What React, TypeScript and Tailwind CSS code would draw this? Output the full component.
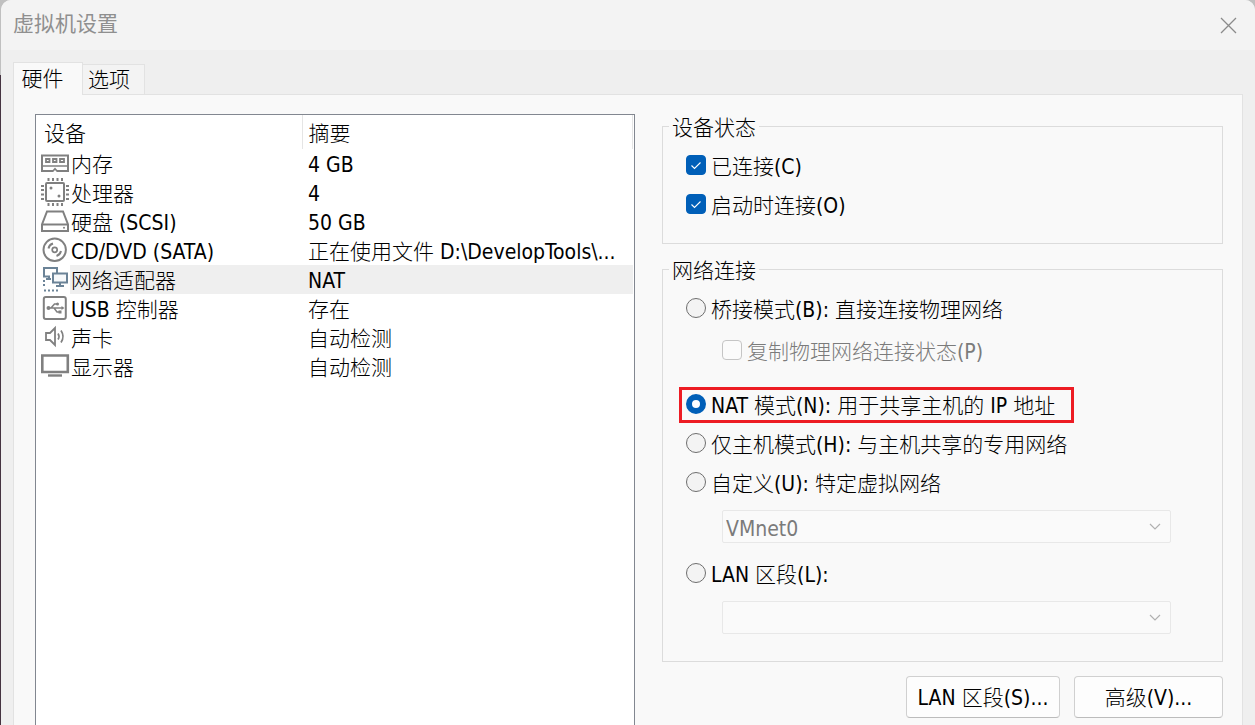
import { useState } from "react";
import type { ReactNode } from "react";

const stroke = { fill: "none", stroke: "#808080", strokeWidth: 2 } as const;

function Icon({ children }: { children: ReactNode }) {
  return (
    <svg width="30" height="29" viewBox="0 0 30 29" className="shrink-0" aria-hidden="true">
      {children}
    </svg>
  );
}

const MemoryIcon = () => (
  <Icon>
    <g {...stroke}>
      <path d="M2 6.500h26v15.500H2z" />
      <path d="M6 10h3.500v3H6zM13 10h3.500v3H13zM20 10h4v3h-4z" strokeWidth="1.800" />
      <path d="M2 17h26" strokeWidth="1.500" />
    </g>
    <path d="M11 23l4-4.500 4 4.500z" fill="#808080" />
    <path d="M13.200 23l1.800-2 1.800 2z" fill="#fff" />
  </Icon>
);

const CpuIcon = () => (
  <Icon>
    <g {...stroke}>
      <rect x="6" y="5" width="18" height="18" rx="1" />
      <path d="M8.500 0v3M13 0v3M17.500 0v3M22 0v3M8.500 25v3M13 25v3M17.500 25v3M22 25v3" />
      <path d="M1 8h3M1 12h3M1 16.500h3M1 21h3M26 8h3M26 12h3M26 16.500h3M26 21h3" />
    </g>
    <circle cx="11" cy="10" r="1.500" fill="#808080" />
    <circle cx="19" cy="18" r="1.500" fill="#808080" />
  </Icon>
);

const DiskIcon = () => (
  <Icon>
    <g {...stroke}>
      <path d="M7 4.500h16l5 13v6.500H2v-6.500z" />
      <path d="M2 17.500h26" />
    </g>
    <circle cx="24" cy="20.800" r="1" fill="#808080" />
  </Icon>
);

const DiscIcon = () => (
  <Icon>
    <g {...stroke}>
      <circle cx="14.700" cy="13.800" r="11.200" />
      <circle cx="14.700" cy="13.800" r="2.500" strokeWidth="1.700" />
      <path d="M8.500 12.500a6.500 6.500 0 0 1 4.500-5M21 15a6.500 6.500 0 0 1-4.500 5" />
    </g>
  </Icon>
);

const NetworkIcon = () => (
  <Icon>
    <g fill="none" stroke="#6b8397" strokeWidth="2">
      <path d="M10 11.500H4V3h13v5" />
      <path d="M6 14h5M9 11v3" />
      <path d="M13 8.500h14v9H13z" fill="#f7f9fb" />
      <path d="M20 18v3M16 21h8" />
      <path d="M4 15v8M4 25.500h16" strokeDasharray="2 2" />
    </g>
  </Icon>
);

const UsbIcon = () => (
  <Icon>
    <rect x="3.800" y="3" width="22" height="22" rx="2" {...stroke} />
    <g fill="none" stroke="#808080" strokeWidth="1.500">
      <path d="M8 14h15M11 14l3.500-4h3M14 14l3 4h2.500" />
    </g>
    <circle cx="8.500" cy="14" r="2" fill="#808080" />
    <circle cx="17.500" cy="10" r="1.500" fill="#808080" />
    <path d="M18.500 16.500h3v3h-3zM21.500 12l3 2-3 2z" fill="#808080" />
  </Icon>
);

const SoundIcon = () => (
  <Icon>
    <path d="M6 10h4l5-5v17l-5-5H6z" {...stroke} strokeWidth="1.800" />
    <path d="M18 10.500q2 3 0 6M21 7.500q4 6 0 12" {...stroke} strokeWidth="1.700" />
  </Icon>
);

const DisplayIcon = () => (
  <Icon>
    <path d="M2.300 3.500h25.500v16.500H2.300z" {...stroke} strokeWidth="2.600" />
    <path d="M8 23.500h14" {...stroke} strokeWidth="2.400" />
  </Icon>
);

const devices = [
  { name: "内存", summary: "4 GB", icon: <MemoryIcon /> },
  { name: "处理器", summary: "4", icon: <CpuIcon /> },
  { name: "硬盘 (SCSI)", summary: "50 GB", icon: <DiskIcon /> },
  { name: "CD/DVD (SATA)", summary: "正在使用文件 D:\\DevelopTools\\...", icon: <DiscIcon /> },
  { name: "网络适配器", summary: "NAT", icon: <NetworkIcon />, selected: true },
  { name: "USB 控制器", summary: "存在", icon: <UsbIcon /> },
  { name: "声卡", summary: "自动检测", icon: <SoundIcon /> },
  { name: "显示器", summary: "自动检测", icon: <DisplayIcon /> },
];

function Group({ title, className, children }: { title: string; className: string; children: ReactNode }) {
  return (
    <fieldset className={`min-w-0 border border-[#dcdcdc] pr-[51px] pl-[23px] ${className}`}>
      <legend className="-ml-[17px] h-6 px-[3px] leading-7">{title}</legend>
      {children}
    </fieldset>
  );
}

function Check({ label, defaultChecked, disabled }: { label: string; defaultChecked?: boolean; disabled?: boolean }) {
  return (
    <label className={`flex items-center gap-[5px] ${disabled ? "text-[#7b7b7b]" : ""}`}>
      <span className="grid">
        <input
          type="checkbox"
          defaultChecked={defaultChecked}
          disabled={disabled}
          className="peer col-start-1 row-start-1 size-5 appearance-none rounded-[4px] border border-[#8a8a8a] bg-[#fbfbfb] checked:border-[#005fb8] checked:bg-[#005fb8] disabled:border-[#c5c5c5]"
        />
        <svg
          viewBox="0 0 20 20"
          className="pointer-events-none invisible col-start-1 row-start-1 size-5 peer-checked:visible"
          aria-hidden="true"
        >
          <path d="M5.500 10.500l3 3 6-6" fill="none" stroke="#fff" strokeWidth="1.100" />
        </svg>
      </span>
      <span className="h-6 leading-7">{label}</span>
    </label>
  );
}

function Radio({ label, checked, onSelect }: { label: string; checked: boolean; onSelect: () => void }) {
  return (
    <label className="flex items-center gap-[5px]">
      <input
        type="radio"
        name="connection"
        checked={checked}
        onChange={onSelect}
        className="size-5 shrink-0 appearance-none rounded-full border border-[#6e6e6e] bg-[#f3f3f3] checked:border-[6px] checked:border-[#005fb8] checked:bg-white"
      />
      <span className="h-6 leading-7">{label}</span>
    </label>
  );
}

function Dropdown({ label, value }: { label: string; value: string }) {
  return (
    <div className="ml-9 grid">
      <select
        aria-label={label}
        disabled
        defaultValue={value}
        className="col-start-1 row-start-1 h-[33px] w-full appearance-none rounded-[2px] border border-[#e8e8e8] bg-[#fafafa] pt-[3px] pl-[3px] text-[#7b7b7b] opacity-100"
      >
        <option>{value}</option>
      </select>
      <svg
        viewBox="0 0 12 8"
        className="pointer-events-none col-start-1 row-start-1 mr-[10px] h-2 w-3 self-center justify-self-end"
        aria-hidden="true"
      >
        <path d="M1 1l5 5 5-5" fill="none" stroke="#b0b0b0" strokeWidth="1.200" />
      </svg>
    </div>
  );
}

export default function App() {
  const [mode, setMode] = useState("nat");
  const button =
    "h-[42px] rounded-[4px] border border-[#d0d0d0] border-b-[#bcbcbc] bg-[#fdfdfd] pt-1 text-center whitespace-nowrap";

  return (
    <div className="flex min-h-screen bg-[#c0c0c0] font-['DejaVu_Sans_Condensed','Noto_Sans_CJK_SC',sans-serif] text-[21px] font-light text-black">
      <div className="w-px shrink-0 bg-linear-to-b from-[#c0c0c0] from-[75px] to-[#453340] to-[75px]" />
      <div className="flex min-w-0 flex-1 flex-col rounded-t-[10px] bg-[#efefef]">
        <header className="flex h-[50px] items-center justify-between rounded-t-[10px] bg-[#f3f3f3] pr-[18px] pl-3">
          <h1 className="font-normal text-[#8f8f8f]">虚拟机设置</h1>
          <button type="button" aria-label="关闭">
            <svg width="17" height="17" viewBox="0 0 17 17" aria-hidden="true">
              <path d="M1 1l15 15M16 1L1 16" stroke="#8a8a8a" strokeWidth="1.300" />
            </svg>
          </button>
        </header>

        <main className="flex flex-1 flex-col px-3 pt-3">
          <div role="tablist" className="flex items-end">
            <button
              type="button"
              role="tab"
              aria-selected="true"
              className="z-10 -mb-px h-[33px] w-[70px] border border-b-0 border-[#e2e2e2] bg-[#f9f9f9] pt-px pr-[11px]"
            >
              硬件
            </button>
            <button
              type="button"
              role="tab"
              aria-selected="false"
              className="h-[30px] w-[62px] border border-b-0 border-l-0 border-[#e2e2e2] bg-[#f3f3f3] pt-px pr-[9px] leading-7"
            >
              选项
            </button>
          </div>

          <div className="grid flex-1 grid-cols-[600fr_561fr] gap-x-[27px] border border-b-0 border-[#e2e2e2] bg-[#f9f9f9] pt-[19px] pr-[19px] pl-[21px]">
            <section className="min-w-0 border border-b-0 border-[#828790] bg-white pr-px">
              <table className="w-full table-fixed border-collapse text-left">
                <colgroup>
                  <col className="w-[266px]" />
                  <col />
                </colgroup>
                <thead>
                  <tr className="h-[34px]">
                    <th className="border-r border-[#e5e5e5] pt-1 pl-2 font-light leading-[29px]">设备</th>
                    <th className="border-r border-[#e5e5e5] pt-1 pl-[6px] font-light leading-[29px]">摘要</th>
                  </tr>
                </thead>
                <tbody>
                  {devices.map((d) => (
                    <tr key={d.name} className="h-[29px]">
                      <td className="p-0">
                        <div className="flex h-[29px] pl-1 leading-8">
                          {d.icon}
                          <span className={`flex-1 whitespace-nowrap pl-px ${d.selected ? "bg-[#efefef]" : ""}`}>
                            {d.name}
                          </span>
                        </div>
                      </td>
                      <td className={`p-0 pl-[6px] ${d.selected ? "bg-[#efefef]" : ""}`}>
                        <div className="h-[29px] truncate leading-8">{d.summary}</div>
                      </td>
                    </tr>
                  ))}
                </tbody>
              </table>
            </section>

            <section className="flex min-w-0 flex-col">
              <Group title="设备状态" className="flex flex-col gap-[15px] pt-[15px] pb-[27px]">
                <Check label="已连接(C)" defaultChecked />
                <Check label="启动时连接(O)" defaultChecked />
              </Group>

              <Group title="网络连接" className="mt-[13px] pt-[15px] pb-[27px]">
                <Radio label="桥接模式(B): 直接连接物理网络" checked={mode === "bridged"} onSelect={() => setMode("bridged")} />
                <div className="mt-[18px] ml-9">
                  <Check label="复制物理网络连接状态(P)" disabled />
                </div>
                <div className="mt-[25px] -ml-[7px] w-fit border-3 border-[#ed1c24] pt-[2px] pr-4 pb-1 pl-1">
                  <Radio label="NAT 模式(N): 用于共享主机的 IP 地址" checked={mode === "nat"} onSelect={() => setMode("nat")} />
                </div>
                <div className="mt-2 flex flex-col gap-[15px]">
                  <Radio label="仅主机模式(H): 与主机共享的专用网络" checked={mode === "host"} onSelect={() => setMode("host")} />
                  <Radio label="自定义(U): 特定虚拟网络" checked={mode === "custom"} onSelect={() => setMode("custom")} />
                </div>
                <div className="mt-4">
                  <Dropdown label="虚拟网络" value="VMnet0" />
                </div>
                <div className="mt-[18px] flex flex-col gap-4">
                  <Radio label="LAN 区段(L):" checked={mode === "lan"} onSelect={() => setMode("lan")} />
                  <Dropdown label="LAN 区段" value="" />
                </div>
              </Group>

              <div className="mt-[14px] flex justify-end gap-[14px] pb-[7px]">
                <button type="button" className={`w-[154px] ${button}`}>LAN 区段(S)...</button>
                <button type="button" className={`w-[149px] ${button}`}>高级(V)...</button>
              </div>
            </section>
          </div>
        </main>
      </div>
    </div>
  );
}
